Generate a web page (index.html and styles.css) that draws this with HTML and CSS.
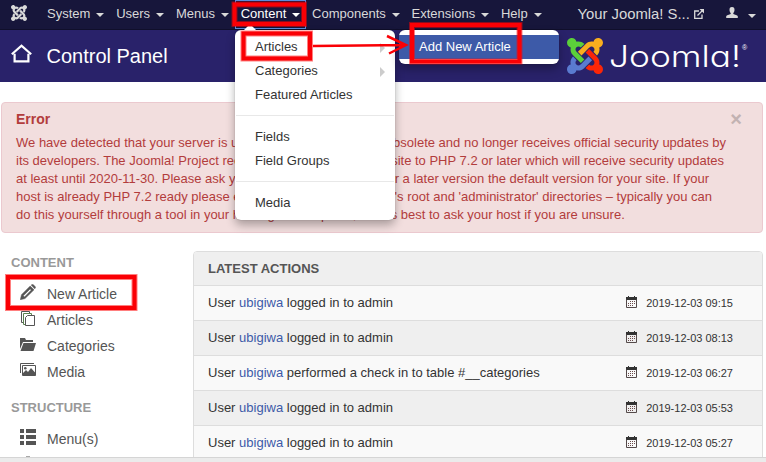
FILE: index.html
```html
<!DOCTYPE html>
<html lang="en">
<head>
<meta charset="utf-8">
<title>Control Panel</title>
<link rel="stylesheet" href="styles.css">
</head>
<body>
<svg class="defs" width="0" height="0">
  <defs>
    <path id="arm" d="M16.719 14.759L14.22 17.26l-2.37 2.37-.462.466c-1.368 1.365-3.297 1.83-5.047 1.397-.327 1.424-1.604 2.49-3.13 2.49C1.44 23.983 0 22.547 0 20.776c0-1.518 1.055-2.789 2.469-3.123-.446-1.76.016-3.705 1.396-5.08l.179-.18 2.37 2.37-.184.181c-.769.779-.769 2.024 0 2.789.771.78 2.022.78 2.787.015l.465-.465 2.367-2.371 2.502-2.506z"/>
    <symbol id="cal" viewBox="0 0 12 12"><path fill="#333" d="M0 1h2V0h1v1h5V0h1v1h2v3H0z"/><path fill="none" stroke="#554a4a" d="M.5 3.500v8h10v-8"/><path fill="#6b4a4a" d="M4 5h1v1H4zM6 5h1v1H6zM8 5h1v1H8zM2 7h1v1H2zM4 7h1v1H4zM6 7h1v1H6zM8 7h1v1H8zM2 9h1v1H2zM4 9h1v1H4zM6 9h1v1H6z"/></symbol>
  </defs>
</svg>

<nav class="navbar">
  <svg class="brand" viewBox="0 0 24 24"><use href="#arm"/><use href="#arm" transform="rotate(90 12 12)"/><use href="#arm" transform="rotate(180 12 12)"/><use href="#arm" transform="rotate(270 12 12)"/></svg>
  <ul class="menu">
    <li>System<i class="caret"></i></li>
    <li>Users<i class="caret"></i></li>
    <li>Menus<i class="caret"></i></li>
    <li class="active">Content<i class="caret"></i></li>
    <li>Components<i class="caret"></i></li>
    <li>Extensions<i class="caret"></i></li>
    <li>Help<i class="caret"></i></li>
  </ul>
  <div class="site">Your Joomla! S...
    <svg width="10" height="10" viewBox="0 0 10 10"><path fill="none" stroke="#d9d9d9" stroke-width="1.300" d="M5 2H.7v7.300h7.300V5.500M3.500 6.500L8.500 1.500"/><path fill="#d9d9d9" d="M5.500 0H10v4.500z"/></svg>
  </div>
  <div class="user">
    <svg width="12" height="11" viewBox="0 0 12 11"><path fill="#d9d9d9" d="M6 0C7.900 0 8.600 1.200 8.500 3 8.400 4.500 8 5.300 7.300 6v1c1.500.7 4.200.9 4.500 2.300V11H.2V9.300C.5 7.900 3.200 7.700 4.700 7V6C4 5.300 3.600 4.500 3.500 3 3.400 1.200 4.100 0 6 0z"/></svg>
    <i class="caret"></i>
  </div>
</nav>

<header class="header">
  <svg class="home" width="21" height="19" viewBox="0 0 21 19"><path fill="none" stroke="#fff" stroke-width="2.200" d="M.8 10.200L10.500 1.600l9.700 8.600M3.600 9.800v7.500h13.800V9.800"/></svg>
  <h1>Control Panel</h1>
  <div class="logo">
    <svg class="mark" viewBox="0 0 24 24"><use href="#arm" fill="#5a7bd0"/><use href="#arm" fill="#5bd03a" transform="rotate(90 12 12)"/><use href="#arm" fill="#f9ae1e" transform="rotate(180 12 12)"/><use href="#arm" fill="#fb2608" transform="rotate(270 12 12)"/></svg>
    <svg class="word" width="142" height="42" viewBox="0 0 142 42"><text x="3" y="29" textLength="132" lengthAdjust="spacingAndGlyphs">Joomla!</text><text class="reg" x="136" y="12">®</text></svg>
  </div>
</header>

<main>
  <section class="alert">
    <span class="close">×</span>
    <h4>Error</h4>
    <p>We have detected that your server is using PHP 7.1 <span class="end e1">obsolete and no longer receives official security updates by</span></p>
    <p>its developers. The Joomla! Project recommends <span class="end e2">site to PHP 7.2 or later which will receive security updates</span></p>
    <p>at least until 2020-11-30. Please ask your host to <span class="end e3">or a later version the default version for your site. If your</span></p>
    <p>host is already PHP 7.2 ready please ensure it <span class="end e4">site's root and 'administrator' directories – typically you can</span></p>
    <p>do this yourself through a tool in your hosting control panel, but it's best to ask your host if you are unsure.</p>
  </section>

  <div class="columns">
    <aside>
      <h2>CONTENT</h2>
      <ul>
        <li><svg width="16" height="16" viewBox="0 0 16 16"><path fill="#555" stroke="#555" stroke-width=".5" fill-rule="evenodd" d="M.3 15.700l1.200-5L10.200 2l3.800 3.800L5 14.600zM11.200 1L12 .5c1-.6 4 2.200 3.500 3.300l-.8 1zM3.300 11.800l1.200 1.200L11.300 6.100 10.100 4.900z"/></svg>New Article</li>
        <li><svg width="16" height="16" viewBox="0 -1 16 16"><g fill="#fff" stroke="#555"><path d="M1.500.5h8v11h-8z"/><path stroke="#5b8250" d="M3.500 2.500h8v11h-8z"/><path d="M7.500 4.500h7v10h-9v-8z"/></g></svg>Articles</li>
        <li><svg width="16" height="16" viewBox="0 -1 16 16"><path fill="#555" d="M0 1h5l1 2h7v2H3L0 12zM3.500 6H16l-2.500 8H.5z"/></svg>Categories</li>
        <li><svg width="16" height="16" viewBox="0 -1 16 16"><path fill="none" stroke="#555" d="M.5 10V.5H14M2.500 2.500h13v10h-13z"/><path fill="#555" d="M3 12.500V10l3-3 2 2 3-4 4.500 5v2.500z"/><circle cx="5.300" cy="5.300" r="1.300" fill="#555"/></svg>Media</li>
      </ul>
      <h2>STRUCTURE</h2>
      <ul>
        <li><svg width="16" height="16" viewBox="0 0 16 16"><path fill="#555" d="M0 0h4v4H0zM6 0h10v4H6zM0 6h4v4H0zM6 6h10v4H6zM0 12h4v4H0zM6 12h10v4H6z"/></svg>Menu(s)</li>
        <li><svg width="16" height="16" viewBox="0 0 16 16"><path fill="#555" d="M6 1.500h4V5h6v10H0V5h6z"/></svg></li>
      </ul>
    </aside>
    <section class="panel">
      <h2>LATEST ACTIONS</h2>
      <div class="row"><span>User <a>ubigiwa</a> logged in to admin</span><time><svg width="12" height="12"><use href="#cal"/></svg>2019-12-03 09:15</time></div>
      <div class="row"><span>User <a>ubigiwa</a> logged in to admin</span><time><svg width="12" height="12"><use href="#cal"/></svg>2019-12-03 08:13</time></div>
      <div class="row"><span>User <a>ubigiwa</a> performed a check in to table #__categories</span><time><svg width="12" height="12"><use href="#cal"/></svg>2019-12-03 06:27</time></div>
      <div class="row"><span>User <a>ubigiwa</a> logged in to admin</span><time><svg width="12" height="12"><use href="#cal"/></svg>2019-12-03 05:53</time></div>
      <div class="row"><span>User <a>ubigiwa</a> logged in to admin</span><time><svg width="12" height="12"><use href="#cal"/></svg>2019-12-03 05:27</time></div>
    </section>
  </div>
</main>
<footer class="status"></footer>

<ul class="dropdown">
  <li class="sub">Articles</li>
  <li class="sub">Categories</li>
  <li>Featured Articles</li>
  <li class="divider"></li>
  <li>Fields</li>
  <li>Field Groups</li>
  <li class="divider"></li>
  <li>Media</li>
</ul>
<ul class="dropdown submenu"><li>Add New Article</li></ul>

<svg class="marks" width="766" height="462" viewBox="0 0 766 462">
  <g class="halo">
    <path d="M234.500 4.500h69.500v19.500h-69.500zM243.500 33.500h66.500v25h-66.500zM412 25h107.500v36.500h-107.500zM8 277h126.500v31h-126.500z"/>
  </g>
  <g class="pen">
    <path d="M234.500 4.500h69.500v19.500h-69.500zM243.500 33.500h66.500v25h-66.500zM412 25h107.500v36.500h-107.500zM8 277h126.500v31h-126.500z"/>
    <path class="arrow" d="M313 46L406 45M387 36L406 45L389 53.500"/>
  </g>
</svg>
</body>
</html>
```
FILE: styles.css
```css
* { box-sizing: border-box; }
body { margin: 0; width: 766px; height: 462px; overflow: hidden; position: relative; background: #fff; color: #333; font: 13px/18px "Liberation Sans", Arial, sans-serif; }
ul { list-style: none; margin: 0; padding: 0; }
h1, h2, h4, p { margin: 0; }
.defs { position: absolute; }

.navbar { height: 30px; display: flex; background: #17163b; border-bottom: 1px solid #100f2b; color: #d9d9d9; }
.brand { width: 16px; height: 16px; margin: 5px 0 0 11px; fill: #d9d9d9; }
.menu { display: flex; margin-left: 14px; line-height: 28px; }
.menu li { padding: 0 5.800px 0 6px; display: flex; height: 29px; }
.menu .active { color: #fff; box-shadow: inset 0 0 0 1px #5a8bdc; }
.caret { width: 0; height: 0; border: 4px solid transparent; border-top-color: currentColor; border-bottom: 0; margin: 13px 0 0 6px; }
.site { margin-left: auto; font-size: 14.850px; line-height: 28px; white-space: nowrap; }
.user { display: flex; width: 40px; margin: 0 0 0 22px; padding-top: 7px; }
.user .caret { margin: 7px 0 0 10px; }

.header { height: 52px; display: flex; background: #29226a; color: #fff; }
.home { margin: 14px 0 0 11px; }
.header h1 { font-size: 20px; font-weight: 400; line-height: 52px; margin-left: 14.500px; }
.logo { display: flex; margin: 8px 18px 0 auto; }
.mark { width: 36px; height: 36px; }
.word { margin-left: 3px; overflow: visible; fill: #fff; font: 300 29.500px Inter, sans-serif; font-feature-settings: "cv11"; }
.reg { font: 7px "Liberation Sans", sans-serif; }

main { height: 380px; overflow: hidden; padding-top: 20px; }
.alert { position: relative; margin: 0 3px 0 1px; height: 131px; padding: 7px 14px; background: #f2dede; border: 1px solid #ebc9cf; border-radius: 4px; color: #b23c3c; white-space: nowrap; }
.alert h4 { font-size: 14px; line-height: 18px; margin-bottom: 6px; }
.alert p { display: flex; height: 18px; justify-content: space-between; }
.e1 { margin-right: 22px; }
.e2 { margin-right: 24px; }
.e3 { margin-right: 39px; }
.e4 { margin-right: 36px; }
.close { position: absolute; right: 20px; top: 7px; font-weight: 700; font-size: 20px; color: #c2b2b2; }

.columns { display: flex; margin-top: 18px; }
aside { width: 193px; padding-left: 11px; }
aside h2 { font-size: 13px; line-height: 18px; color: #999; padding-top: 3px; }
aside ul { margin: 9px 0 11px; color: #555; font-size: 14px; }
aside li { height: 26px; display: flex; line-height: 26px; padding-left: 9px; }
aside li svg { margin: 3px 11px 0 0; }
.panel { width: 570px; height: 230px; border: 1px solid #ddd; border-radius: 4px; overflow: hidden; }
.panel h2 { height: 33px; background: #efefef; font-size: 13px; line-height: 33px; padding-left: 14px; color: #555; }
.row { height: 35px; border-top: 1px solid #ddd; background: #f9f9f9; display: flex; justify-content: space-between; align-items: center; padding: 0 29px 0 14px; }
.row:nth-child(odd) { background: #efefef; }
.row a { color: #3d5aa8; }
.row time { font-size: 11px; display: flex; align-items: center; }
.row time svg { margin: -2px 8px 0 0; }
.status { position: absolute; left: 0; right: 0; bottom: 0; height: 5px; background: #ebebeb; border-top: 1px solid #d5d5d5; }

.dropdown { position: absolute; left: 235px; top: 30px; width: 160px; padding: 5px 0; background: #fff; border-radius: 6px; box-shadow: 0 5px 10px rgba(0,0,0,.3), 0 0 1px rgba(0,0,0,.4); }
.dropdown::before { content: ""; position: absolute; left: 9px; top: -6px; border: 6px solid transparent; border-top: 0; border-bottom-color: #fff; }
.dropdown li { height: 24px; line-height: 23px; padding: 0 20px; position: relative; }
.dropdown .sub::after { content: ""; position: absolute; right: 10px; top: 8px; border: 5px solid transparent; border-right: 0; border-left-color: #ccc; }
.dropdown .divider { height: 1px; margin: 8px 1px 9px; background: #e8e8e8; }
.submenu { left: 399px; }
.submenu::before { display: none; }
.submenu li { background: #3d5aa8; color: #fff; }

.marks { position: absolute; left: 0; top: 0; pointer-events: none; }
.halo { fill: none; stroke: #ff0000; stroke-opacity: .5; stroke-width: 6; }
.pen { fill: none; stroke: #fa0005; stroke-width: 4; }
.arrow { stroke-width: 2.500; }
```
